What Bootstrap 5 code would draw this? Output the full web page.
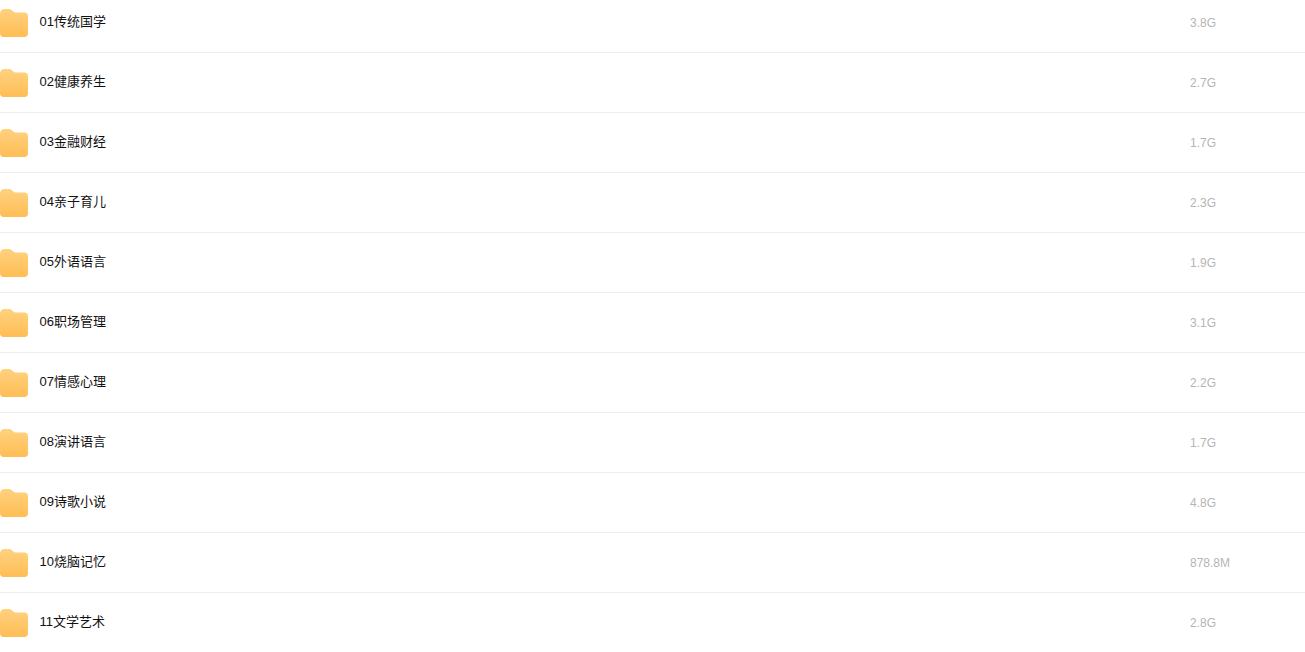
<!DOCTYPE html>
<html lang="zh">
<head>
    <meta charset="UTF-8">
    <meta name="viewport" content="width=device-width, initial-scale=1">
    <title>文件列表</title>
    <link href="https://cdn.jsdelivr.net/npm/bootstrap@5.3.2/dist/css/bootstrap.min.css" rel="stylesheet">
    <script defer src="https://cdn.jsdelivr.net/npm/bootstrap@5.3.2/dist/js/bootstrap.bundle.min.js"></script>
    <style>
        html, body { height: 100%; overflow: hidden; }
        body { background: #fff; }
        .file-list { margin-top: -7px; }
        .file-row {
            height: 60px;
            border-bottom: 1px solid #ededed;
            font-family: "Liberation Sans", "Noto Sans CJK SC", sans-serif;
        }
        .file-icon { width: 28px; height: 28px; flex: none; margin-top: 1px; }
        .file-name { width: 1150px; flex: none; margin-left: 11.5px; margin-right: .5px; margin-bottom: 2px; font-size: 13px; color: #111; }
        .file-size { font-size: 12px; color: #b5b5b5; }
    </style>
</head>
<body>
<svg width="0" height="0" class="d-block">
    <defs>
        <linearGradient id="folderFill" x1="0" y1="0" x2="0" y2="1">
            <stop offset="0" stop-color="#ffd27f"/>
            <stop offset="1" stop-color="#ffbd55"/>
        </linearGradient>
        <symbol id="folder" viewBox="0 0 28 28">
            <path d="M0 4.500C0 1.800 1.800 0 4.500 0H8.500C10.500 0 11.500 .7 12.500 1.700C13.700 2.900 14.500 3.500 16 3.500H24.500C26.500 3.500 28 5 28 7V24.500C28 26.500 26.500 28 24.500 28H3.500C1.500 28 0 26.500 0 24.500Z" fill="url(#folderFill)"/>
        </symbol>
    </defs>
</svg>
<div class="file-list" id="fileList"></div>

<script>
    const files = [
        ["01传统国学", "3.8G"],
        ["02健康养生", "2.7G"],
        ["03金融财经", "1.7G"],
        ["04亲子育儿", "2.3G"],
        ["05外语语言", "1.9G"],
        ["06职场管理", "3.1G"],
        ["07情感心理", "2.2G"],
        ["08演讲语言", "1.7G"],
        ["09诗歌小说", "4.8G"],
        ["10烧脑记忆", "878.8M"],
        ["11文学艺术", "2.8G"]
    ];
    document.getElementById("fileList").innerHTML = files.map(f => `
        <div class="file-row d-flex align-items-center">
            <svg class="file-icon"><use href="#folder"/></svg>
            <div class="file-name">${f[0]}</div>
            <div class="file-size">${f[1]}</div>
        </div>`).join("");
</script>
</body>
</html>
